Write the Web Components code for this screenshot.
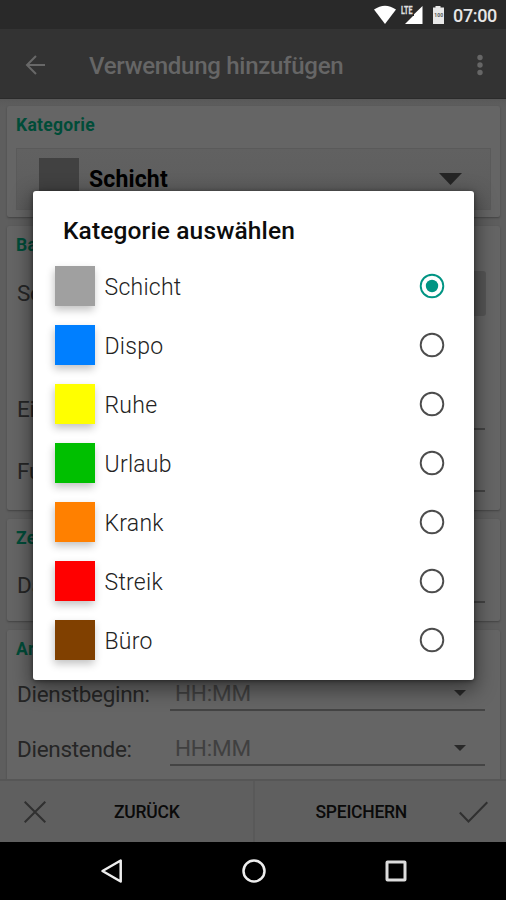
<!DOCTYPE html>
<html lang="de">
<head>
<meta charset="utf-8">
<title>Verwendung hinzufügen</title>
<style>
html,body{margin:0;height:900px;overflow:hidden;background:#000}
body{font-family:Roboto,"Liberation Sans",sans-serif}
</style>
</head>
<body>
<duty-screen></duty-screen>
<script>
const define = (name, html) => customElements.define(name, class extends HTMLElement {
  connectedCallback() {
    if (this.shadowRoot) return;
    const t = document.createElement('template');
    t.innerHTML = typeof html === 'function' ? html(this) : html;
    this.attachShadow({mode: 'open'}).append(t.content.cloneNode(true));
  }
});

define('status-bar', `
<style>
:host{display:flex;height:29px;background:#292929;justify-content:flex-end;align-items:center}
svg{display:block;width:124px;height:29px}
span{width:45px;margin:3px 8px 0 1px;font-size:18px;line-height:26px;font-weight:500;color:#e6e6e6;white-space:nowrap;letter-spacing:-.35px}
.lte{font:bold 10px Roboto,sans-serif;fill:#ddd;stroke:#ddd;stroke-width:.3}
.pct{font:bold 5px Roboto,sans-serif;fill:#555}
</style>
<svg viewBox="328 0 124 29"><path d="M374 9.500Q385 1.800 396 9.500L385 24Z" fill="#fff"/>
<path d="M422.500 6V24H405L413 16H414V14.300Z" fill="#fff"/>
<text class="lte" x="401" y="13.500" textLength="11.500" lengthAdjust="spacingAndGlyphs">LTE</text>
<path d="M435.500 6h5v1.500h3.500V24H433V7.500h2.500Z" fill="#e8e8e8"/>
<text class="pct" x="434.200" y="17" textLength="9">100</text></svg>
<span>07:00</span>`);

define('app-bar', `
<style>
:host{display:flex;height:70px;box-sizing:border-box;background:#333;align-items:center;padding:3px 20px 0 25px;border-bottom:1px solid #2b2b2b}
svg{display:block}
h1{margin:2px 0 0 44px;font-size:24px;font-weight:500;line-height:30px;color:#666;flex:1;white-space:nowrap;letter-spacing:-.28px}
</style>
<svg width="20" height="20" viewBox="0 0 20 20" fill="none" stroke="#686868" stroke-width="2"><path d="M20 10H2M11 1L2 10l9 9"/></svg>
<h1><slot></slot></h1>
<svg width="12" height="22" viewBox="0 0 12 22" fill="#666"><circle cx="6" cy="3.500" r="2.700"/><circle cx="6" cy="11" r="2.700"/><circle cx="6" cy="18.500" r="2.700"/></svg>`);

define('form-card', `
<style>
:host{display:block;background:#656565;border-radius:2px;box-shadow:0 1px 2px #444;box-sizing:border-box;padding:8px 9px 0;flex:none}
h2{margin:0 0 1px;font-size:17.500px;line-height:22px;font-weight:700;color:#004c38;letter-spacing:.3px}
</style>
<h2><slot name="title"></slot></h2><slot></slot>`);

define('category-select', `
<style>
:host{display:flex;height:62px;margin-top:12px;background:linear-gradient(#616161,#5c5c5c);border:1px solid #5a5a5a;box-sizing:border-box;align-items:center;padding:0 28px 0 22px}
i{width:40px;height:41px;margin-top:-2px;background:#414141}
b{margin:1px 0 0 10px;font-size:23px;line-height:30px;font-weight:700;color:#000;flex:1;letter-spacing:.15px}
svg{display:block}
</style>
<i></i><b><slot></slot></b><svg width="23" height="12"><path d="M0 0h23L11.500 12Z" fill="#252525"/></svg>`);

define('form-row', el => `
<style>
:host{display:flex;align-items:center;height:40px;color:#262626;font-size:22.500px}
span{width:152px;line-height:30px;white-space:nowrap;padding-left:1px;letter-spacing:-.3px}
.f{flex:1;height:34px;box-sizing:border-box;border-bottom:2px solid #444;display:flex;align-items:center;justify-content:space-between;padding:0 19px 0 5px;color:#404040;line-height:30px;margin:var(--line-drop,0) 6px 0 1px;letter-spacing:-.2px}
.g{flex:1;height:45px;background:#565656;border-radius:3px;margin-right:5px}
svg{display:block}
</style>
<span><slot></slot></span>${el.hasAttribute('block') ? '<div class="g"></div>' : `<div class="f"><div>${el.getAttribute('hint') || ''}</div>${el.hasAttribute('hint') ? '<svg width="12" height="6"><path d="M0 0h12L6 6Z" fill="#292929"/></svg>' : ''}</div>`}`);

define('action-bar', `
<style>
:host{display:flex;height:63px;background:#5f5f5f;box-sizing:border-box;border-top:2px solid #565656;align-items:stretch;color:#0a0a0a;font-size:17.500px;font-weight:500}
div{flex:1;display:flex;align-items:center;box-sizing:border-box}
.l{flex:none;width:255px;padding-left:24px;gap:68px;border-right:2px solid #595959}
.r{padding-right:18px;gap:52px;justify-content:flex-end}
svg{display:block}
span{line-height:24px;white-space:nowrap;letter-spacing:-.25px}
</style>
<div class="l"><svg width="22" height="22" viewBox="0 0 22 22" fill="none" stroke="#303030" stroke-width="2"><path d="M.7.7l20.600 20.600M21.300.7L.7 21.300"/></svg><span><slot name="back"></slot></span></div>
<div class="r"><span><slot name="save"></slot></span><svg width="29" height="22" viewBox="0 0 29 22" fill="none" stroke="#303030" stroke-width="2"><path d="M.8 11.500L9.500 20.500 28.300 1.300"/></svg></div>`);

define('nav-bar', `
<style>
:host{display:flex;height:58px;background:#000;align-items:center;padding:0 99px 0 101px;justify-content:space-between}
svg{display:block}
</style>
<svg width="22" height="24" viewBox="0 0 22 24" fill="none" stroke="#eee" stroke-width="2.500" stroke-linejoin="round"><path d="M19.700 1.500v21L1.500 12Z"/></svg>
<svg width="24" height="24" fill="none" stroke="#eee" stroke-width="2.500"><circle cx="12" cy="12" r="10.500"/></svg>
<svg width="22" height="22" fill="none" stroke="#dcdcdc" stroke-width="3"><rect x="2" y="2" width="18" height="18" rx=".5"/></svg>`);

define('radio-option', el => `
<style>
:host{display:flex;height:59.100px;align-items:center;padding:0 29px 0 22px;font-size:23px;color:#222}
i{width:40px;height:40px;background:${el.getAttribute('color')};box-shadow:-1px 4px 8px rgba(0,0,0,.24)}
span{flex:1;margin-left:9.500px;line-height:30px;padding-top:4px;font-weight:300;letter-spacing:.25px}
svg{display:block}
</style>
<i></i><span><slot></slot></span>
<svg width="26" height="26" fill="none" stroke="${el.hasAttribute('checked') ? '#009483' : '#4c4c4c'}" stroke-width="1.900"><circle cx="13" cy="13" r="11.300"/>${el.hasAttribute('checked') ? '<circle cx="13" cy="13" r="6.200" fill="#009483" stroke="none"/>' : ''}</svg>`);

define('choice-dialog', `
<style>
:host{position:absolute;left:33px;top:191px;width:441px;height:489px;background:#fff;border-radius:3px;box-sizing:border-box;box-shadow:0 7px 20px 3px rgba(0,0,0,.42),0 1px 4px rgba(0,0,0,.45);display:flex;flex-direction:column}
h1{margin:25px 0 10px 30px;font-size:24.500px;line-height:30px;font-weight:500;color:#0c0c0c;letter-spacing:.14px}
</style>
<h1><slot name="title"></slot></h1><slot></slot>`);

define('duty-screen', `
<style>
:host{display:flex;flex-direction:column;width:506px;height:900px;position:relative;overflow:hidden}
main{flex:1;min-height:0;overflow:hidden;background:linear-gradient(#595959,#5e5e5e 8px);padding:7px 6px 0 7px;display:flex;flex-direction:column;gap:9px}
</style>
<status-bar></status-bar>
<app-bar>Verwendung hinzufügen</app-bar>
<main>
<form-card style="height:111px"><span slot="title">Kategorie</span><category-select>Schicht</category-select></form-card>
<form-card style="height:284px"><span slot="title">Ba</span>
<form-row block style="margin-top:17px">Sc</form-row>
<form-row style="margin-top:76px;--line-drop:8px">Ei</form-row>
<form-row style="margin-top:22px;--line-drop:8px">Fu</form-row></form-card>
<form-card style="height:102px"><span slot="title">Ze</span><form-row style="margin-top:16px;--line-drop:2px">Da</form-row></form-card>
<form-card style="height:170px"><span slot="title">Ar</span>
<form-row hint="HH:MM" style="margin-top:14px">Dienstbeginn:</form-row>
<form-row hint="HH:MM" style="margin-top:15px">Dienstende:</form-row></form-card>
</main>
<action-bar><span slot="back">ZURÜCK</span><span slot="save">SPEICHERN</span></action-bar>
<nav-bar></nav-bar>
<choice-dialog><span slot="title">Kategorie auswählen</span>
<radio-option color="#a0a0a0" checked>Schicht</radio-option>
<radio-option color="#007fff">Dispo</radio-option>
<radio-option color="#ffff00">Ruhe</radio-option>
<radio-option color="#00bf00">Urlaub</radio-option>
<radio-option color="#ff8000">Krank</radio-option>
<radio-option color="#ff0000">Streik</radio-option>
<radio-option color="#804000">Büro</radio-option>
</choice-dialog>`);
</script>
</body>
</html>
